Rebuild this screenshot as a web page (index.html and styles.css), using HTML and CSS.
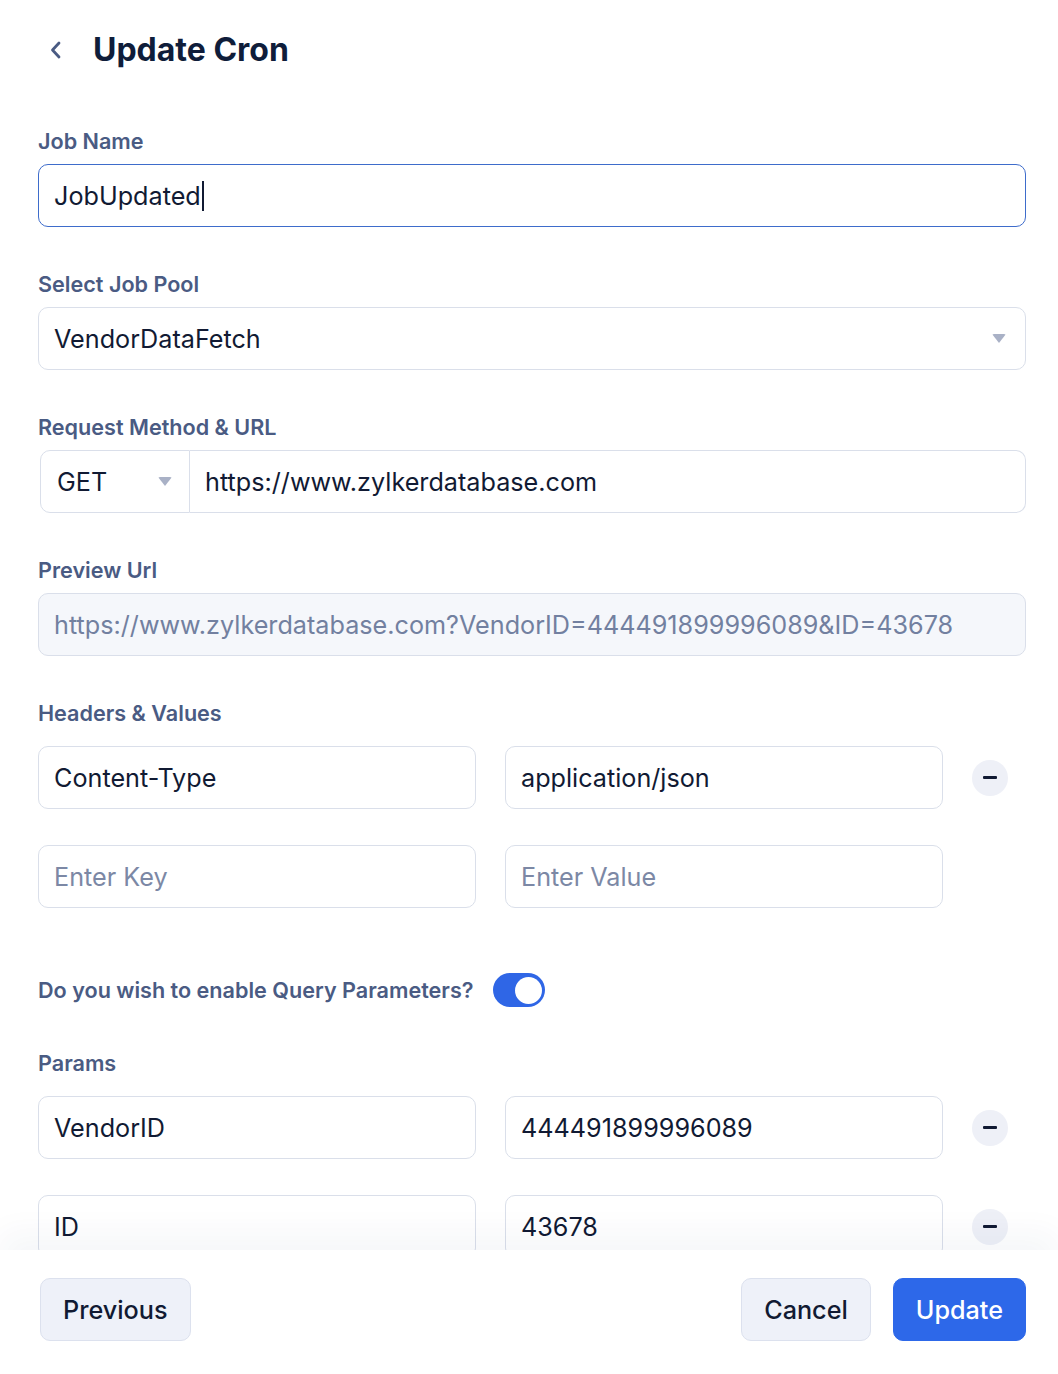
FILE: index.html
```html
<!DOCTYPE html>
<html lang="en">
<head>
<meta charset="utf-8">
<title>Update Cron</title>
<link rel="stylesheet" href="styles.css">
</head>
<body>
<div class="page">
  <main class="content">
    <header class="head">
      <span class="back">
        <svg width="14" height="20" viewBox="0 0 14 20"><path d="M10 3 L3.5 10 L10 17" fill="none" stroke="#4a5b83" stroke-width="2.8" stroke-linecap="round" stroke-linejoin="round"/></svg>
      </span>
      <h1 class="title">Update Cron</h1>
    </header>

    <section class="field">
      <div class="label">Job Name</div>
      <div class="input focus"><span class="value">JobUpdated</span><span class="cursor"></span></div>
    </section>

    <section class="field">
      <div class="label">Select Job Pool</div>
      <div class="input select"><span class="value">VendorDataFetch</span><span class="caret"></span></div>
    </section>

    <section class="field">
      <div class="label">Request Method &amp; URL</div>
      <div class="group">
        <div class="input method"><span class="value">GET</span><span class="caret"></span></div>
        <div class="input url"><span class="value">https://www.zylkerdatabase.com</span></div>
      </div>
    </section>

    <section class="field">
      <div class="label">Preview Url</div>
      <div class="input preview"><span class="value">https://www.zylkerdatabase.com?VendorID=444491899996089&amp;ID=43678</span></div>
    </section>

    <section class="field">
      <div class="label">Headers &amp; Values</div>
      <div class="rows">
        <div class="kv">
          <div class="input"><span class="value">Content-Type</span></div>
          <div class="input"><span class="value">application/json</span></div>
          <span class="minus"></span>
        </div>
        <div class="kv">
          <div class="input"><span class="placeholder">Enter Key</span></div>
          <div class="input"><span class="placeholder">Enter Value</span></div>
        </div>
      </div>
    </section>

    <section class="toggle-row">
      <span class="toggle-label">Do you wish to enable Query Parameters?</span>
      <span class="toggle"><span class="knob"></span></span>
    </section>

    <section class="field">
      <div class="label">Params</div>
      <div class="rows">
        <div class="kv">
          <div class="input"><span class="value">VendorID</span></div>
          <div class="input"><span class="value">444491899996089</span></div>
          <span class="minus"></span>
        </div>
        <div class="kv">
          <div class="input"><span class="value">ID</span></div>
          <div class="input"><span class="value">43678</span></div>
          <span class="minus"></span>
        </div>
      </div>
    </section>
  </main>

  <footer class="footer">
    <button class="btn">Previous</button>
    <div class="actions">
      <button class="btn">Cancel</button>
      <button class="btn primary">Update</button>
    </div>
  </footer>
</div>
</body>
</html>
```

FILE: styles.css
```css
* { box-sizing: border-box; }
html, body { margin: 0; padding: 0; background: #ffffff; }
body { font-family: Inter, "Noto Sans", sans-serif; color: #111a33; }

.page {
  width: 1058px;
  height: 1374px;
  display: flex;
  flex-direction: column;
  overflow: hidden;
}

.content {
  flex: 1;
  overflow: hidden;
  padding: 30px 32px 0 38px;
}

.head {
  display: flex;
  align-items: center;
  height: 40px;
  margin-bottom: 59px;
}
.back {
  width: 55px;
  padding-left: 11px;
  display: flex;
  align-items: center;
}
.back svg { display: block; }
.title {
  margin: 0;
  font-size: 32px;
  line-height: 40px;
  font-weight: 700;
  color: #0f1d3a;
}

.field { margin-bottom: 45px; }
.label {
  font-size: 21.6px;
  line-height: 25px;
  font-weight: 600;
  color: #4a5b83;
  margin-bottom: 10px;
}

.input {
  height: 63px;
  border: 1px solid #dadfea;
  border-radius: 10px;
  background: #ffffff;
  display: flex;
  align-items: center;
  padding: 0 15px;
  font-size: 25.2px;
  color: #111a33;
}
.input.focus { border-color: #3e6ccb; }
.value { white-space: nowrap; }
.placeholder { color: #7c88a5; white-space: nowrap; }
.cursor {
  display: inline-block;
  width: 2px;
  height: 30px;
  background: #111a33;
  margin-left: 1px;
}

.select { justify-content: space-between; padding-right: 19px; }
.caret {
  width: 0; height: 0;
  border-left: 7px solid transparent;
  border-right: 7px solid transparent;
  border-top: 9px solid #a9b1c6;
  border-radius: 2px;
}

.group { display: flex; padding-left: 2px; }
.method {
  width: 150px;
  flex: none;
  border-radius: 10px 0 0 10px;
  justify-content: space-between;
  padding-left: 16px;
  padding-right: 17px;
}
.url {
  flex: 1;
  border-left: none;
  border-radius: 0 10px 10px 0;
}

.preview {
  background: #f5f7fb;
  color: #7280a0;
}

.rows {
  display: flex;
  flex-direction: column;
  gap: 36px;
  padding-top: 10px;
}
.kv {
  display: grid;
  grid-template-columns: 1fr 1fr 54px;
  column-gap: 29px;
  align-items: center;
}
.minus {
  width: 36px;
  height: 36px;
  border-radius: 50%;
  background: #eef0f7;
  position: relative;
}
.minus::after {
  content: "";
  position: absolute;
  left: 11px;
  top: 16px;
  width: 14px;
  height: 3px;
  border-radius: 1px;
  background: #111a33;
}

.toggle-row {
  display: flex;
  align-items: center;
  gap: 19px;
  margin-top: 65px;
  margin-bottom: 44px;
}
.toggle-label {
  font-size: 21.6px;
  line-height: 25px;
  font-weight: 600;
  color: #4a5b83;
}
.toggle {
  width: 52px;
  height: 34px;
  border-radius: 17px;
  background: #2f66e6;
  display: flex;
  align-items: center;
  justify-content: flex-end;
  padding-right: 3px;
}
.knob {
  width: 27px;
  height: 27px;
  border-radius: 50%;
  background: #ffffff;
}

.footer {
  flex: none;
  height: 124px;
  background: #ffffff;
  padding: 28px 32px 0 40px;
  display: flex;
  justify-content: space-between;
  align-items: flex-start;
  position: relative;
  z-index: 2;
  box-shadow: 0 -18px 30px rgba(30, 45, 90, 0.04);
}
.actions { display: flex; gap: 22px; }
.btn {
  height: 63px;
  padding: 0 22px;
  border: 1px solid #dce1ee;
  border-radius: 10px;
  background: #eef1f9;
  font-family: Inter, "Noto Sans", sans-serif;
  font-size: 25.2px;
  font-weight: 500;
  color: #111a33;
}
.btn.primary {
  background: #2d68e9;
  border-color: #2d68e9;
  color: #ffffff;
}
```
